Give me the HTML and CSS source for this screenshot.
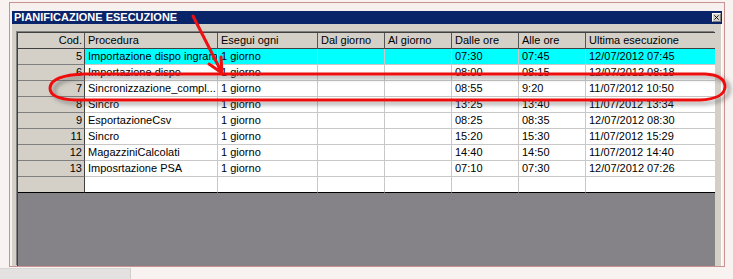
FILE: index.html
```html
<!DOCTYPE html>
<html lang="it">
<head>
    <meta charset="UTF-8">
    <title>Pianificazione esecuzione</title>
    <link rel="stylesheet" href="styles.css">
</head>
<body>
    <div class="window">
        <div class="title-bar">
            <span class="title">PIANIFICAZIONE ESECUZIONE</span>
            <span class="close-btn">
                <svg width="7" height="7" viewBox="0 0 7 7"><path d="M0.5 0.5 L6.5 6.5 M6.5 0.5 L0.5 6.5" stroke="#000" stroke-width="1.2"/></svg>
            </span>
        </div>
        <div class="panel">
            <div class="grid">
                <div class="row header">
                    <div class="cell cod">Cod.</div>
                    <div class="cell">Procedura</div>
                    <div class="cell">Esegui ogni</div>
                    <div class="cell">Dal giorno</div>
                    <div class="cell">Al giorno</div>
                    <div class="cell">Dalle ore</div>
                    <div class="cell">Alle ore</div>
                    <div class="cell">Ultima esecuzione</div>
                </div>
                <div class="row selected">
                    <div class="cell cod">5</div>
                    <div class="cell">Importazione dispo ingram</div>
                    <div class="cell">1 giorno</div>
                    <div class="cell"></div>
                    <div class="cell"></div>
                    <div class="cell">07:30</div>
                    <div class="cell">07:45</div>
                    <div class="cell">12/07/2012 07:45</div>
                </div>
                <div class="row">
                    <div class="cell cod">6</div>
                    <div class="cell">Importazione dispo</div>
                    <div class="cell">1 giorno</div>
                    <div class="cell"></div>
                    <div class="cell"></div>
                    <div class="cell">08:00</div>
                    <div class="cell">08:15</div>
                    <div class="cell">12/07/2012 08:18</div>
                </div>
                <div class="row">
                    <div class="cell cod">7</div>
                    <div class="cell">Sincronizzazione_compl...</div>
                    <div class="cell">1 giorno</div>
                    <div class="cell"></div>
                    <div class="cell"></div>
                    <div class="cell">08:55</div>
                    <div class="cell">9:20</div>
                    <div class="cell">11/07/2012 10:50</div>
                </div>
                <div class="row">
                    <div class="cell cod">8</div>
                    <div class="cell">Sincro</div>
                    <div class="cell">1 giorno</div>
                    <div class="cell"></div>
                    <div class="cell"></div>
                    <div class="cell">13:25</div>
                    <div class="cell">13:40</div>
                    <div class="cell">11/07/2012 13:34</div>
                </div>
                <div class="row">
                    <div class="cell cod">9</div>
                    <div class="cell">EsportazioneCsv</div>
                    <div class="cell">1 giorno</div>
                    <div class="cell"></div>
                    <div class="cell"></div>
                    <div class="cell">08:25</div>
                    <div class="cell">08:35</div>
                    <div class="cell">12/07/2012 08:30</div>
                </div>
                <div class="row">
                    <div class="cell cod">11</div>
                    <div class="cell">Sincro</div>
                    <div class="cell">1 giorno</div>
                    <div class="cell"></div>
                    <div class="cell"></div>
                    <div class="cell">15:20</div>
                    <div class="cell">15:30</div>
                    <div class="cell">11/07/2012 15:29</div>
                </div>
                <div class="row">
                    <div class="cell cod">12</div>
                    <div class="cell">MagazziniCalcolati</div>
                    <div class="cell">1 giorno</div>
                    <div class="cell"></div>
                    <div class="cell"></div>
                    <div class="cell">14:40</div>
                    <div class="cell">14:50</div>
                    <div class="cell">11/07/2012 14:40</div>
                </div>
                <div class="row">
                    <div class="cell cod">13</div>
                    <div class="cell">Imposrtazione PSA</div>
                    <div class="cell">1 giorno</div>
                    <div class="cell"></div>
                    <div class="cell"></div>
                    <div class="cell">07:10</div>
                    <div class="cell">07:30</div>
                    <div class="cell">12/07/2012 07:26</div>
                </div>
                <div class="row last">
                    <div class="cell cod"></div>
                    <div class="cell"></div>
                    <div class="cell"></div>
                    <div class="cell"></div>
                    <div class="cell"></div>
                    <div class="cell"></div>
                    <div class="cell"></div>
                    <div class="cell"></div>
                </div>
                <div class="empty-area"></div>
            </div>
        </div>
    </div>
    <div class="tab"></div>

    <!-- annotazioni rosse sopra lo screenshot -->
    <svg class="annotations" width="733" height="279" viewBox="0 0 733 279">
        <defs>
            <filter id="shadow" x="-5%" y="-50%" width="110%" height="200%">
                <feDropShadow dx="4" dy="3" stdDeviation="2" flood-color="#444" flood-opacity="0.55"/>
            </filter>
        </defs>
        <path d="M 85 74 L 705 74 Q 725 75 725 87 Q 724 99 700 100 L 75 100 Q 50 99 50 88 Q 51 75 85 74 Z"
              fill="none" stroke="#ee1111" stroke-width="3" filter="url(#shadow)"/>
        <path d="M 193 16 L 222 73 M 222 73 L 221 57 M 222 73 L 209 64"
              fill="none" stroke="#ee1111" stroke-width="3" stroke-linecap="round"/>
    </svg>
</body>
</html>
```

FILE: styles.css
```css
body {
    margin: 0;
    background-color: #f8f2f0;
    font-family: "Liberation Sans", Arial, sans-serif;
    font-size: 11px;
    width: 733px;
    height: 279px;
    position: relative;
    overflow: hidden;
}
.window {
    box-sizing: border-box;
    margin: 2px 0 0 9px;
    width: 716px;
    height: 265px;
    border: 1px solid #c99191;
    padding: 8px 2px 0 2px;
    background-color: #f6f0ee;
    display: flex;
    flex-direction: column;
}
.title-bar {
    height: 13px;
    background-color: #0a246a;
    display: flex;
    align-items: center;
    justify-content: space-between;
    padding: 0 1px 0 2px;
}
.title {
    color: #fff;
    font-weight: bold;
    font-size: 11px;
    line-height: 13px;
}
.close-btn {
    box-sizing: border-box;
    width: 9px;
    height: 9px;
    background-color: #d4d0c8;
    border: 1px solid #808080;
    border-top-color: #fff;
    border-left-color: #fff;
    display: flex;
    align-items: center;
    justify-content: center;
}
.close-btn svg {
    width: 5px;
    height: 5px;
}
.panel {
    flex: 1;
    background-color: #d4d0c8;
    padding: 8px 6px 0 5px;
    display: flex;
    border-right: 1px solid #fff;
}
.grid {
    flex: 1;
    display: flex;
    flex-direction: column;
    border-top: 1px solid #404040;
    border-left: 1px solid #404040;
    box-shadow: -1px -1px 0 #808080;
}
.row {
    display: grid;
    grid-template-columns: 67px 133px 100px 67px 67px 67px 67px 1fr;
    height: 16px;
}
.cell {
    box-sizing: border-box;
    height: 16px;
    line-height: 15px;
    padding-left: 3px;
    white-space: nowrap;
    overflow: hidden;
    background-color: #fff;
    border-right: 1px solid #c8c8c8;
    border-bottom: 1px solid #c8c8c8;
    color: #000;
}
.cell:last-child {
    border-right: none;
}
.cod {
    background-color: #d4d0c8;
    text-align: right;
    padding: 0 2px 0 0;
    border-right: 1px solid #404040;
    border-bottom: 1px solid #808080;
}
.header .cell {
    background-color: #d4d0c8;
    border-right: 1px solid #555;
    border-bottom: 1px solid #404040;
}
.header .cell:last-child {
    border-right: none;
}
.selected .cell {
    background-color: #00ffff;
}
.selected .cod {
    background-color: #d4d0c8;
}
.last .cell {
    border-bottom: 1px solid #000;
}
.empty-area {
    flex: 1;
    background-color: #858387;
}
.tab {
    position: absolute;
    left: 0;
    top: 268px;
    width: 130px;
    height: 12px;
    background-color: #e4e2e0;
    border-top: 1px solid #d8d6d4;
    border-right: 1px solid #d0cecc;
}
.annotations {
    position: absolute;
    left: 0;
    top: 0;
    pointer-events: none;
}
```
